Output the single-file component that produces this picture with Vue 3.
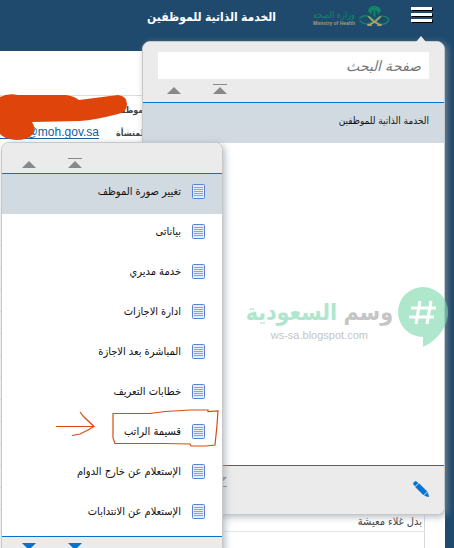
<script setup>
const services = [
  'تغيير صورة الموظف',
  'بياناتى',
  'خدمة مديري',
  'ادارة الاجازات',
  'المباشرة بعد الاجازة',
  'خطابات التعريف',
  'قسيمة الراتب',
  'الإستعلام عن خارج الدوام',
  'الإستعلام عن الانتدابات'
]
const salaryRows = [...Array(13).fill(''), 'بدل غلاء معيشة']
</script>

<template>
  <div class="page" dir="rtl">
    <header class="topbar">
      <button class="burger" aria-label="القائمة"><i></i><i></i><i></i></button>
      <div class="brand">
        <svg class="emblem" viewBox="0 0 31 20" aria-hidden="true">
          <g fill="none" stroke-linecap="round">
            <path d="M1 12 C6 8 10 10 15 14 S25 21 30 14" stroke="#0d8a63" stroke-width="1.5" />
            <path d="M30 13 C25 8 21 10 16 14 S6 20 1 15" stroke="#0d8a63" stroke-width="1.2" />
            <path d="M11 18.500 Q17 16 21 11 M20 18.500 Q14 16 10 11 M9 19 L12 19 M19 19 L22 19" stroke="#b3a06a" stroke-width="1.8" />
            <path d="M15.500 10 V3" stroke="#0d8a63" stroke-width="1.800" />
            <path d="M15 3 Q11 0 10 5 M15 3 Q12 3 11.500 7 M16 3 Q20 0 21 5 M16 3 Q19 3 19.500 7 M12 2 Q15 -1 19 2" stroke="#0d8a63" stroke-width="1.900" />
          </g>
        </svg>
        <div class="brand-text">
          <span class="brand-ar">وزارة الصحة</span>
          <span class="brand-en" dir="ltr">Ministry of Health</span>
        </div>
      </div>
      <h1>الخدمة الذاتية للموظفين</h1>
    </header>

    <main class="content">
      <section class="details" dir="ltr">
        <div class="detail"><span class="value"></span><b>الموظف</b></div>
        <div class="detail"><span class="value"><a href="#">@moh.gov.sa</a></span><b>للمنشأة</b></div>
      </section>
      <table class="salary">
        <tbody>
          <tr v-for="(row, i) in salaryRows" :key="i"><td>{{ row }}</td></tr>
          <tr><td></td></tr>
        </tbody>
      </table>
    </main>

    <section class="panel main-panel">
      <div class="panel-head">
        <input type="text" placeholder="صفحة البحث" aria-label="صفحة البحث" />
        <div class="arrows">
          <button aria-label="الأول"><svg viewBox="0 0 14 11"><path d="M0 0h14v1H0zM7 3l7 7H0z" /></svg></button>
          <button aria-label="أعلى"><svg viewBox="0 0 14 11"><path d="M7 3l7 7H0z" /></svg></button>
        </div>
      </div>
      <ul class="panel-list">
        <li class="selected"><a href="#">الخدمة الذاتية للموظفين</a></li>
      </ul>
      <div class="panel-foot">
        <button class="edit" aria-label="تحرير">
          <svg class="pencil" viewBox="0 0 16 16">
            <path d="M0 2.500L2.500 0 5 2 2 5zM2.500 6L6 2.500 14 10.500 10.500 14zM11.500 14.500L14.500 11.500 16 16z" fill="#0572ce" stroke="#0572ce" stroke-width=".5" />
          </svg>
        </button>
        <button class="last" aria-label="الأخير"><svg viewBox="0 0 14 11"><path d="M0 0h14L7 7zM0 9h14v1H0z" /></svg></button>
      </div>
    </section>

    <div class="watermark" aria-hidden="true">
      <svg viewBox="0 0 50 60">
        <path d="M25 0a25 25 0 0 1 25 25c0 16-12 29-25 35v-10a25 25 0 0 1 0-50z" fill="#7ed8ae" fill-opacity=".62" />
        <path d="M22 14l-4 23M33 14l-4 23M13 21h25M11 30h25" stroke="#fff" stroke-width="3" fill="none" />
      </svg>
      <div class="mark-text">
        <strong>وسم <em>السعودية</em></strong>
        <span dir="ltr">ws-sa.blogspot.com</span>
      </div>
    </div>

    <nav class="panel side-panel">
      <div class="panel-head">
        <div class="arrows">
          <button aria-label="الأول"><svg viewBox="0 0 14 11"><path d="M0 0h14v1H0zM7 3l7 7H0z" /></svg></button>
          <button aria-label="أعلى"><svg viewBox="0 0 14 11"><path d="M7 3l7 7H0z" /></svg></button>
        </div>
      </div>
      <ul class="panel-list">
        <li v-for="(name, i) in services" :key="name" :class="{ selected: i === 0 }">
          <a href="#">
            <svg class="doc" viewBox="0 0 13 15" aria-hidden="true">
              <rect x=".5" y=".5" width="12" height="14" rx="1" fill="#e3edfd" stroke="#5285d6" />
              <path d="M2 3.500h9M2 5.500h9M2 7.500h9M2 9.500h9M2 11.500h9" stroke="#7fa6e8" />
            </svg>
            {{ name }}
          </a>
        </li>
      </ul>
      <div class="panel-foot">
        <div class="arrows down">
          <button aria-label="الأخير"><svg viewBox="0 0 14 11"><path d="M0 0h14L7 7zM0 9h14v1H0z" /></svg></button>
          <button aria-label="أسفل"><svg viewBox="0 0 14 11"><path d="M0 0h14L7 7z" /></svg></button>
        </div>
      </div>
    </nav>

    <svg class="ink" viewBox="0 0 454 548" aria-hidden="true">
      <path d="M0 97Q8 93 18 95L66 95Q74 96 79 100L118 95Q127 96 127 104Q127 112 118 114Q95 120 80 121L32 122Q36 128 33 134Q28 140 16 140Q4 139 0 134z" fill="#df450b" />
      <g fill="none" stroke="#d94a12" stroke-width="1.200">
        <path d="M113 413.500H150L165 411.500 190 410 208 410V411.500L218 411 217 425 215 445 206 446H191L190 444 164 443.500H115L113 438z" />
        <path d="M56 426.500H94M80 412L84 417 94 426.500 88 430 80 434 72 435.500" />
      </g>
    </svg>
  </div>
</template>

<style>
body {
  margin: 0;
  background: #1f4a6d;
}
</style>

<style scoped>
.page {
  position: relative;
  display: flex;
  flex-direction: column;
  height: 100vh;
  overflow: hidden;
  font-family: "Liberation Sans", "DejaVu Sans Condensed", "DejaVu Sans", sans-serif;
  font-size: 11px;
  color: #111;
}
button {
  display: block;
  border: 0;
  padding: 0;
  background: none;
}
svg {
  display: block;
}
a {
  color: inherit;
  text-decoration: none;
}
ul {
  list-style: none;
  margin: 0;
  padding: 0;
}
.topbar {
  display: flex;
  align-items: flex-start;
  flex: none;
  height: 45px;
  padding: 6px 22px 0;
  background: #1f4a6d;
}
.burger {
  display: grid;
  gap: 3px;
  width: 21px;
  padding-top: 1px;
}
.burger i {
  height: 3px;
  background: #fff;
  box-shadow: 1px 1px 0 #000;
}
.brand {
  display: flex;
  gap: 4px;
  margin-right: 21px;
}
.emblem {
  width: 31px;
  height: 20px;
}
.brand-text {
  display: flex;
  flex-direction: column;
  align-items: flex-end;
  width: 42px;
  padding-top: 4px;
  white-space: nowrap;
}
.brand-ar {
  font-size: 9px;
  line-height: 10px;
  color: #0d8a63;
}
.brand-en {
  font-size: 5px;
  line-height: 6px;
  font-weight: bold;
  color: #a39a78;
}
h1 {
  margin: 0 37px 0 0;
  font-size: 12px;
  line-height: 22px;
  color: #fff;
  white-space: nowrap;
}
.content {
  flex: 1;
  margin-right: 9px;
  padding-top: 44px;
  background: #fff;
}
.details {
  padding-top: 2px;
  border-top: 1px solid #d3dfea;
}
.detail {
  display: flex;
  gap: 17px;
  align-items: center;
  height: 23px;
  color: #444;
}
.detail b {
  font-size: 9px;
}
.value {
  width: 99px;
}
.value a {
  display: block;
  border-bottom: 1px solid #145c9e;
  font-size: 12px;
  line-height: 12px;
  text-align: right;
  color: #145c9e;
}
.salary {
  width: calc(100% - 20px);
  margin: 80px 20px 0 0;
  border-collapse: collapse;
  border-right: 1px solid #d5d9de;
}
.salary td {
  height: 21px;
  padding: 0 2px 0 0;
  border-bottom: 1px solid #e4e7ea;
  line-height: 20px;
  font-size: 11px;
  color: #444;
}
.panel {
  position: absolute;
  box-sizing: border-box;
  display: flex;
  flex-direction: column;
  border: 1px solid #c6c8ca;
  border-radius: 8px;
  background: #fff;
  box-shadow: 2px 2px 7px rgba(150, 160, 170, 0.7);
}
.main-panel {
  top: 41px;
  bottom: 33px;
  left: 142px;
  right: 9px;
}
.main-panel::before {
  content: "";
  position: absolute;
  top: -6px;
  right: 18px;
  border: 5px solid transparent;
  border-top: 0;
  border-bottom: 6px solid #ebebeb;
}
.side-panel {
  top: 142px;
  left: 1px;
  width: 222px;
}
.panel-head {
  border-bottom: 1px solid #0572ce;
  border-radius: 7px 7px 0 0;
  background: #ebebeb;
}
.main-panel .panel-head {
  padding: 10px 15px 7px;
}
.side-panel .panel-head {
  padding: 15px 15px 4px;
}
input {
  display: block;
  box-sizing: border-box;
  width: 100%;
  height: 27px;
  padding: 0 8px;
  border: 0;
  background: #fff;
  font: italic 14px "Liberation Sans", "DejaVu Sans Condensed", "DejaVu Sans", sans-serif;
}
input::placeholder {
  color: #777;
  opacity: 1;
}
.arrows {
  display: flex;
  align-items: flex-start;
  justify-content: flex-end;
  gap: 32px;
  padding: 0 5px;
}
.main-panel .arrows {
  padding: 5px 9px 0;
}
.arrows svg,
.last svg {
  width: 14px;
  height: 11px;
  fill: #888;
}
.down svg {
  fill: #0572ce;
}
.panel-list {
  flex: 1;
}
.panel-list a {
  display: flex;
  align-items: center;
  gap: 11px;
  height: 35px;
  padding: 0 17px 5px;
  white-space: nowrap;
}
.main-panel .panel-list a {
  padding-right: 15px;
  font-size: 10px;
}
.selected {
  background: #d1d9e1;
}
.doc {
  width: 13px;
  height: 15px;
}
.panel-foot {
  display: flex;
  justify-content: space-between;
  height: 48px;
  border-top: 1px solid #0572ce;
  border-radius: 0 0 7px 7px;
  background: #ebebeb;
}
.main-panel .panel-foot {
  align-items: flex-start;
  padding: 11px 15px 0 70px;
  height: 37px;
}
.main-panel .panel-foot .edit {
  padding-top: 4px;
}
.side-panel .panel-foot {
  justify-content: flex-end;
  margin-top: 2px;
  padding: 6px 15px 0;
}
.pencil {
  width: 16px;
  height: 16px;
}
.watermark {
  position: absolute;
  top: 287px;
  right: 6px;
  display: flex;
  gap: 5px;
}
.watermark svg {
  width: 50px;
  height: 60px;
}
.mark-text {
  display: flex;
  flex-direction: column;
  align-items: center;
  padding-top: 10px;
  color: #c5c5c5;
  white-space: nowrap;
}
.mark-text strong {
  font-size: 23px;
  line-height: 30px;
}
.mark-text em {
  font-style: normal;
  color: #afe6cd;
}
.mark-text span {
  font-size: 11px;
  line-height: 16px;
}
.ink {
  position: absolute;
  top: 0;
  left: 0;
  width: 454px;
  height: 548px;
  pointer-events: none;
}
</style>
